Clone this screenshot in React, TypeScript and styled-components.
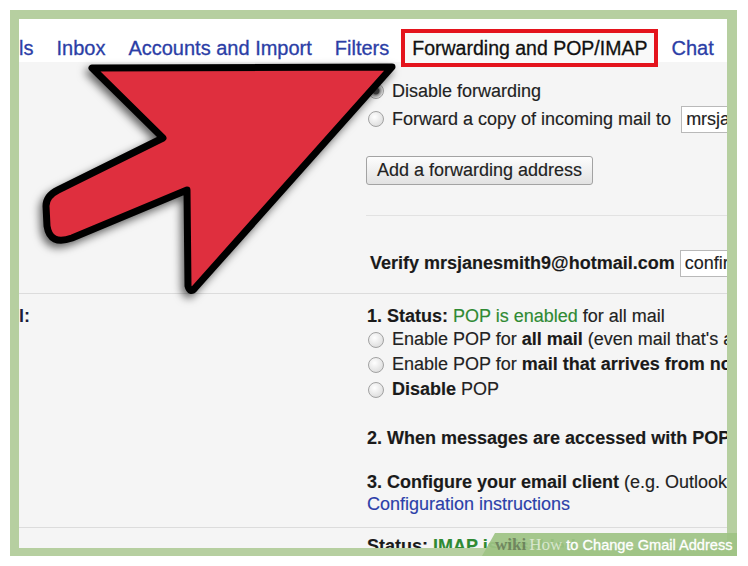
import styled, { createGlobalStyle } from 'styled-components';

const GlobalStyle = createGlobalStyle`
  html, body {
    margin: 0;
    background: #fff;
  }
  body {
    font-family: "Liberation Sans", Arial, sans-serif;
    color: #222;
  }
`;

const Stage = styled.div`
  position: relative;
  width: 727px;
  height: 546px;
  margin: 10px 0 0 10px;
`;

const Frame = styled.div`
  width: 100%;
  height: 100%;
  box-sizing: border-box;
  border-style: solid;
  border-color: #b6cfa0;
  border-width: 9px 10px 8px 9px;
  overflow: hidden;
  display: flex;
  flex-direction: column;
  background: #f5f5f5;
`;

const TabBar = styled.div`
  height: 43px;
  flex-shrink: 0;
  background: #fff;
  display: flex;
  align-items: flex-start;
  gap: 23px;
  white-space: nowrap;
`;

const Tab = styled.span`
  padding-top: 17px;
  line-height: 24px;
  font-size: 20px;
  color: #2b3ea6;
  -webkit-text-stroke: 0.3px currentColor;
`;

const ActiveTab = styled.span`
  position: relative;
  z-index: 1;
  margin: 10px -10px 0 -11px;
  height: 38px;
  box-sizing: border-box;
  border: 4px solid #e4141d;
  padding: 0 7px;
  background: #f9f9f9;
  font-size: 19.5px;
  line-height: 30px;
  color: #111;
  -webkit-text-stroke: 0.3px currentColor;
`;

const Settings = styled.div`
  flex: 1;
  display: flex;
  flex-direction: column;
`;

const Row = styled.div<{ $top: number; $bottom: number; $last?: boolean }>`
  display: grid;
  grid-template-columns: 348px 1fr;
  padding: ${({ $top, $bottom }) => `${$top}px 0 ${$bottom}px`};
  border-bottom: ${({ $last }) => ($last ? 'none' : '1px solid #dcdcdc')};
  white-space: nowrap;
`;

const Label = styled.div`
  font-size: 18px;
  line-height: 22px;
  font-weight: bold;
  color: #1c1c3a;
`;

const Content = styled.div`
  display: flex;
  flex-direction: column;
  font-size: 18px;
  -webkit-text-stroke: 0.15px currentColor;
`;

const RadioLine = styled.div<{ $h: number }>`
  display: flex;
  align-items: center;
  height: ${({ $h }) => $h}px;
  gap: 8px;
  margin-left: 1px;
`;

const Radio = styled.span<{ $checked?: boolean }>`
  flex-shrink: 0;
  width: 16px;
  height: 16px;
  box-sizing: border-box;
  border-radius: 50%;
  border: 1px solid #a2a2a2;
  background: ${({ $checked }) =>
    $checked
      ? 'radial-gradient(circle, #444 0 3px, #9a9a9a 4px, #e6e6e6 7px)'
      : 'radial-gradient(circle at 40% 35%, #fff, #d4d4d4)'};
`;

const Line = styled.div<{ $mt?: number }>`
  height: 22px;
  line-height: 22px;
  margin-top: ${({ $mt }) => $mt ?? 0}px;
`;

const Strong = styled.b`
  font-weight: bold;
  color: #1a1a1a;
`;

const Good = styled.span<{ $bold?: boolean }>`
  color: #2f8a33;
  font-weight: ${({ $bold }) => ($bold ? 'bold' : 'normal')};
`;

const LinkText = styled.span`
  color: #2c3fa9;
`;

const Button = styled.span`
  align-self: flex-start;
  margin: 23px 0 0 -1px;
  height: 29px;
  box-sizing: border-box;
  padding: 0 10px;
  border: 1px solid #a3a3a3;
  border-radius: 3px;
  background: linear-gradient(#fdfdfd, #e2e2e2);
  line-height: 27px;
  color: #222;
`;

const Divider = styled.div`
  height: 1px;
  margin: 30px 0 0 -1px;
  background: #e2e2e2;
`;

const VerifyLine = styled.div`
  display: flex;
  align-items: center;
  height: 28px;
  margin: 33px 0 0 3px;
  font-weight: bold;
  color: #1a1a1a;
`;

const Field = styled.span<{ $ml: number }>`
  display: inline-block;
  height: 27px;
  box-sizing: border-box;
  margin-left: ${({ $ml }) => $ml}px;
  padding: 0 4px;
  border: 1px solid #b9b9b9;
  background: #fff;
  line-height: 25px;
  font-weight: normal;
  color: #222;
`;

const Arrow = styled.svg`
  position: absolute;
  left: 20px;
  top: 45px;
  width: 380px;
  height: 260px;
  overflow: visible;
  filter: drop-shadow(-3px 4px 4px rgba(0, 0, 0, 0.6));
`;

const Badge = styled.div`
  position: absolute;
  right: 0;
  bottom: 0;
  width: 255px;
  height: 23px;
  box-sizing: border-box;
  padding-left: 13px;
  clip-path: polygon(13px 0, 100% 0, 100% 100%, 0 100%);
  background: rgba(158, 195, 132, 0.93);
  display: flex;
  align-items: center;
  white-space: nowrap;
`;

const BadgeWiki = styled.span`
  font-family: "Liberation Serif", serif;
  font-weight: bold;
  font-size: 17px;
  color: rgba(70, 80, 60, 0.55);
`;

const BadgeHow = styled.span`
  font-family: "Liberation Serif", serif;
  font-size: 17px;
  margin-left: 3px;
  color: rgba(255, 255, 255, 0.6);
`;

const BadgeTitle = styled.span`
  margin-left: 4px;
  font-size: 14.6px;
  color: #fff;
  -webkit-text-stroke: 0.3px #fff;
`;

export default function App() {
  return (
    <>
      <GlobalStyle />
      <Stage>
        <Frame>
          <TabBar>
            <Tab>ls</Tab>
            <Tab>Inbox</Tab>
            <Tab>Accounts and Import</Tab>
            <Tab>Filters</Tab>
            <ActiveTab>Forwarding and POP/IMAP</ActiveTab>
            <Tab>Chat</Tab>
          </TabBar>

          <Settings>
            <Row $top={15} $bottom={16}>
              <Label />
              <Content>
                <RadioLine $h={28}>
                  <Radio $checked /> Disable forwarding
                </RadioLine>
                <RadioLine $h={28}>
                  <Radio /> Forward a copy of incoming mail to
                  <Field $ml={2}>mrsjanesmith9@hotmail.com</Field>
                </RadioLine>
                <Button>Add a forwarding address</Button>
                <Divider />
                <VerifyLine>
                  Verify mrsjanesmith9@hotmail.com
                  <Field $ml={5}>confirmation code</Field>
                </VerifyLine>
              </Content>
            </Row>

            <Row $top={11} $bottom={12}>
              <Label>l:</Label>
              <Content>
                <Line>
                  <Strong>1. Status: </Strong>
                  <Good>POP is enabled</Good> for all mail
                </Line>
                <RadioLine $h={25}>
                  <Radio /> <span>Enable POP for <Strong>all mail</Strong> (even mail that's already been downloaded)</span>
                </RadioLine>
                <RadioLine $h={25}>
                  <Radio /> <span>Enable POP for <Strong>mail that arrives from now on</Strong></span>
                </RadioLine>
                <RadioLine $h={25}>
                  <Radio /> <span><Strong>Disable</Strong> POP</span>
                </RadioLine>
                <Line $mt={25}>
                  <Strong>2. When messages are accessed with POP</Strong>
                </Line>
                <Line $mt={22}>
                  <Strong>3. Configure your email client</Strong> (e.g. Outlook, Eudora, Netscape Mail)
                </Line>
                <Line>
                  <LinkText>Configuration instructions</LinkText>
                </Line>
              </Content>
            </Row>

            <Row $top={7} $bottom={0} $last>
              <Label />
              <Content>
                <Line>
                  <Strong>Status: </Strong>
                  <Good $bold>IMAP is disabled</Good>
                </Line>
              </Content>
            </Row>
          </Settings>
        </Frame>

        <Arrow viewBox="30 55 380 260">
          <path
            d="M 92 68 L 392 67 L 195 288 Q 190 294 188 286 L 187 190 L 72 238 Q 50 246 47 226 L 46 206 Q 46 196 58 190 L 163 138 Z"
            fill="#df2f3e"
            stroke="#000"
            strokeWidth={7}
            strokeLinejoin="round"
          />
        </Arrow>

        <Badge>
          <BadgeWiki>wiki</BadgeWiki>
          <BadgeHow>How</BadgeHow>
          <BadgeTitle>to Change Gmail Address</BadgeTitle>
        </Badge>
      </Stage>
    </>
  );
}
